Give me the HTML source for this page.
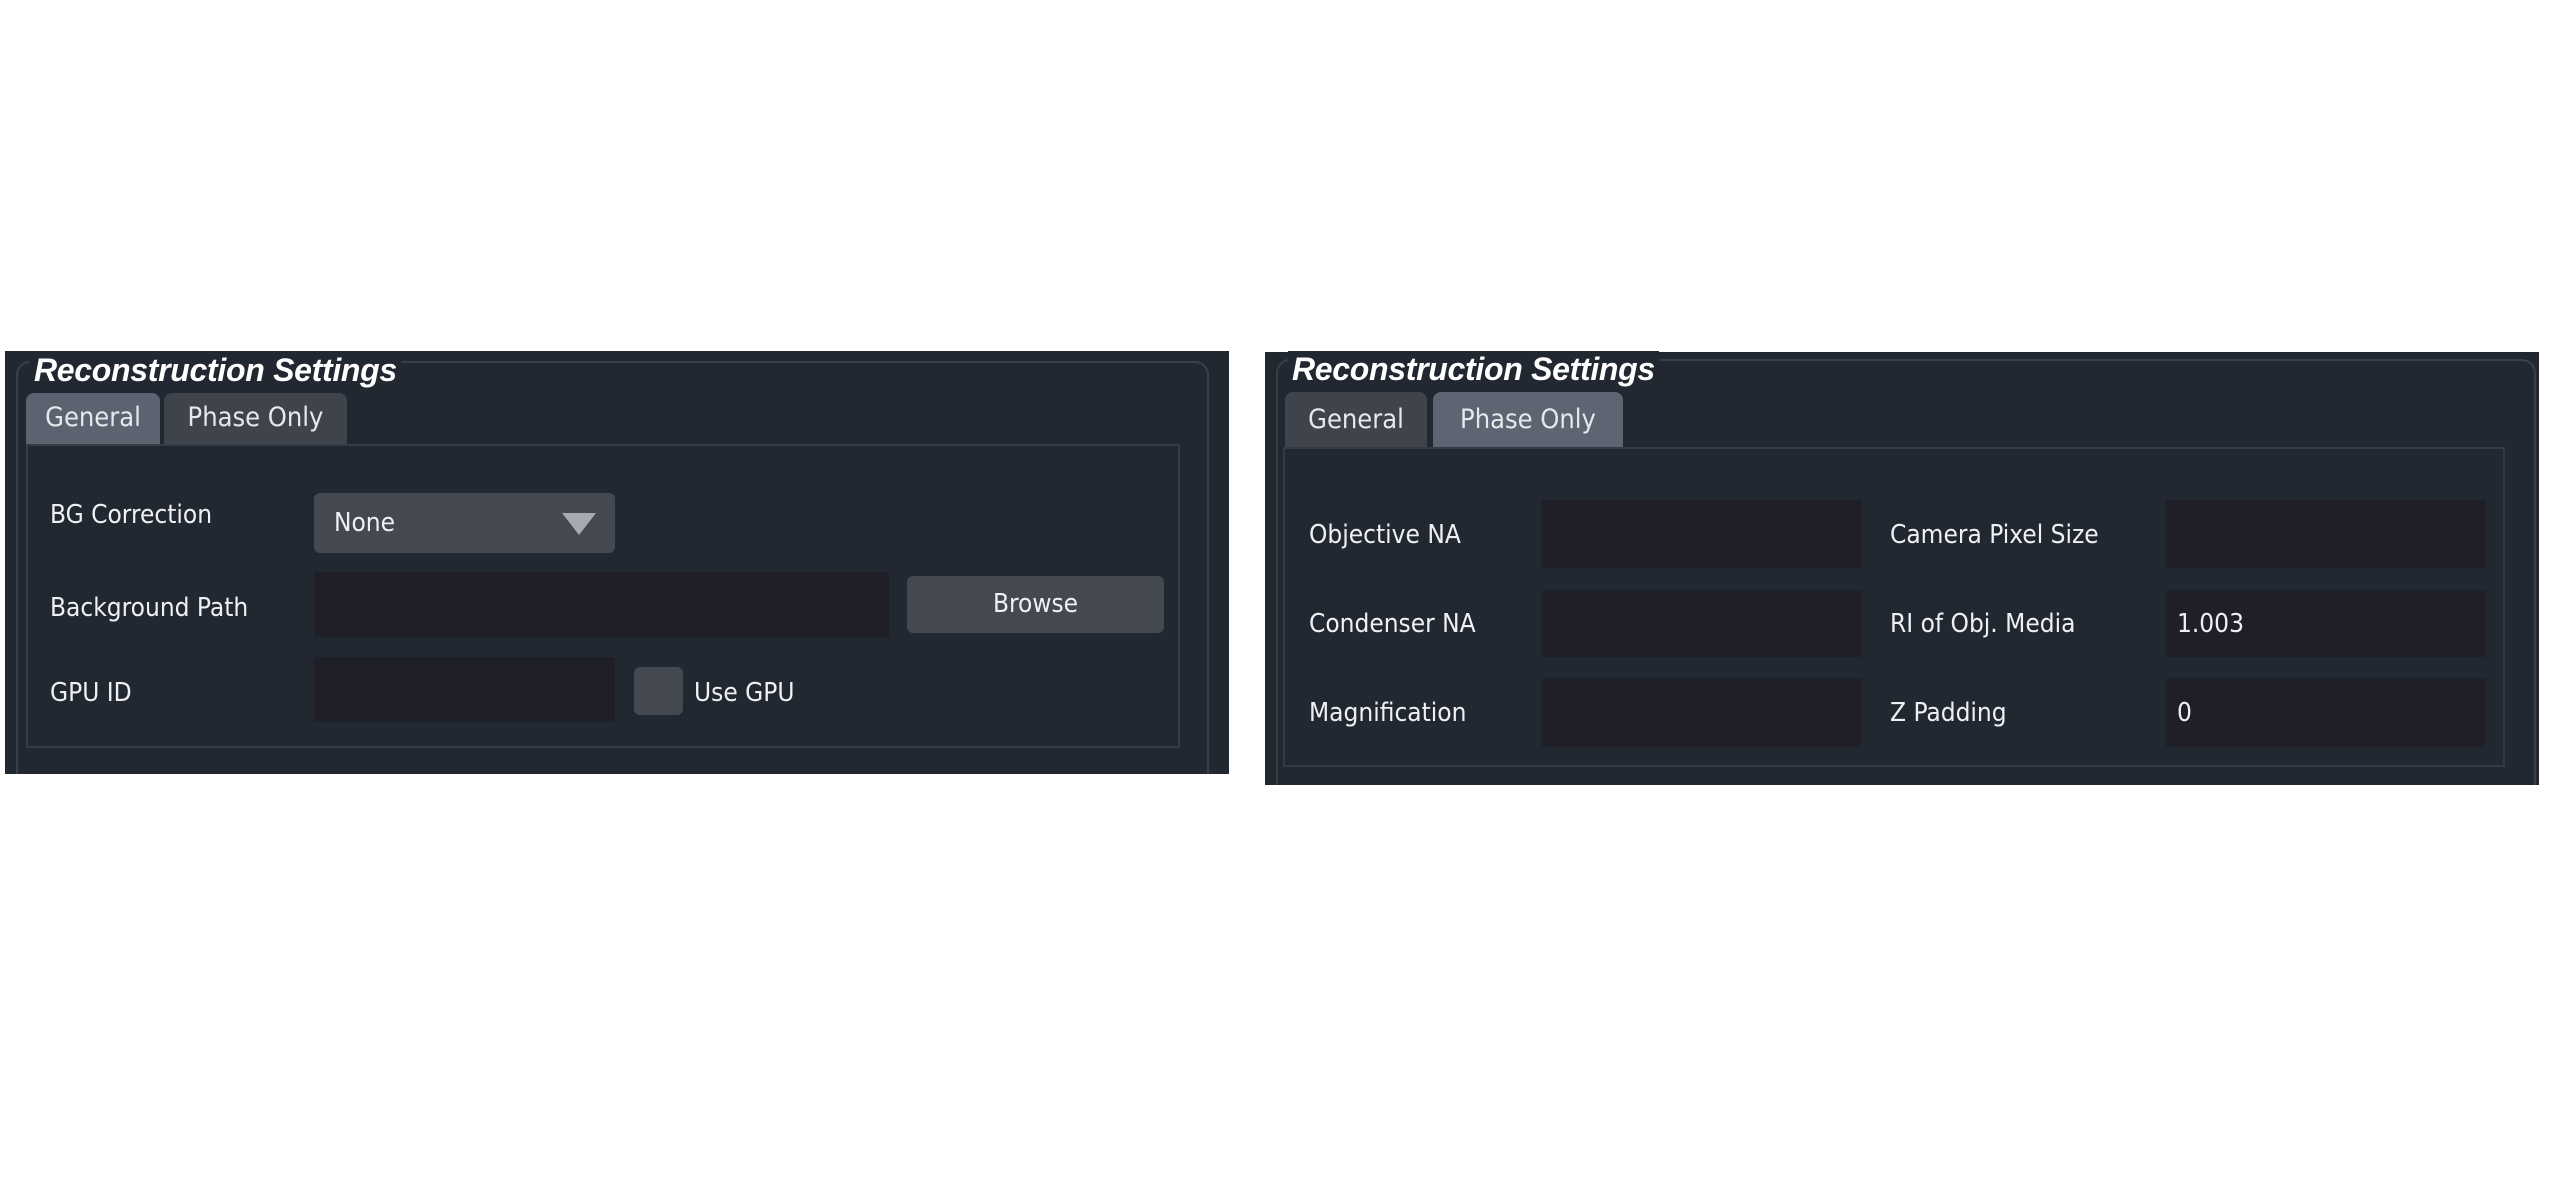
<!DOCTYPE html>
<html><head><meta charset="utf-8"><style>
html,body{margin:0;padding:0;background:#fff;width:2550px;height:1200px;overflow:hidden;position:relative;font-family:"DejaVu Sans Condensed","Liberation Sans",sans-serif;}
.p{position:absolute;background:#222831;overflow:hidden;}
.a{position:absolute;box-sizing:border-box;}
.grp{border:2px solid #3a3f48;border-radius:14px;}
.pane{border:2px solid #353b44;}
.title{position:absolute;color:#fff;font-family:"Liberation Sans",sans-serif;font-weight:bold;font-style:italic;font-size:32px;background:#222831;padding:0 4px;line-height:36px;letter-spacing:-0.3px;}
.tab{position:absolute;box-sizing:border-box;border-radius:8px 8px 0 0;color:#e6e8ec;font-size:27px;line-height:50px;text-align:center;}
.lbl{position:absolute;color:#eef0f3;font-size:26px;line-height:30px;white-space:nowrap;}
.inp{position:absolute;background:#1f1f27;}
.btn{position:absolute;background:#434851;border-radius:6px;color:#eef0f3;font-size:26px;text-align:center;}
</style></head><body>

<!-- Left panel -->
<div class="p" style="left:5px;top:351px;width:1224px;height:423px;">
<div class="a grp" style="left:11px;top:10px;width:1193px;height:440px;"></div>
</div>
<div class="title" style="left:30px;top:352px;">Reconstruction Settings</div>
<div class="tab" style="left:26px;top:393px;width:134px;height:52px;background:#5b6270;">General</div>
<div class="tab" style="left:164px;top:393px;width:183px;height:52px;background:#3f434b;">Phase Only</div>
<div class="a pane" style="left:26px;top:444px;width:1154px;height:304px;"></div>
<div class="lbl" style="left:50px;top:500px;">BG Correction</div>
<div class="btn" style="left:314px;top:493px;width:301px;height:60px;text-align:left;"><span style="position:absolute;left:20px;top:15px;">None</span>
<svg style="position:absolute;left:248px;top:20px" width="36" height="24"><polygon points="0,0 34,0 17,22" fill="#a7aab0"/></svg></div>
<div class="lbl" style="left:50px;top:593px;">Background Path</div>
<div class="inp" style="left:314px;top:572px;width:575px;height:65px;"></div>
<div class="btn" style="left:907px;top:576px;width:257px;height:57px;line-height:57px;">Browse</div>
<div class="lbl" style="left:50px;top:678px;">GPU ID</div>
<div class="inp" style="left:314px;top:657px;width:301px;height:65px;"></div>
<div class="a" style="left:634px;top:667px;width:49px;height:48px;background:#434851;border-radius:6px;"></div>
<div class="lbl" style="left:694px;top:678px;">Use GPU</div>

<!-- Right panel -->
<div class="p" style="left:1265px;top:352px;width:1274px;height:433px;">
<div class="a grp" style="left:11px;top:7px;width:1260px;height:460px;"></div>
</div>
<div class="title" style="left:1288px;top:351px;">Reconstruction Settings</div>
<div class="tab" style="left:1285px;top:392px;width:142px;height:55px;background:#3f434b;line-height:56px;">General</div>
<div class="tab" style="left:1433px;top:392px;width:190px;height:55px;background:#5d6472;line-height:56px;">Phase Only</div>
<div class="a pane" style="left:1283px;top:447px;width:1222px;height:320px;"></div>

<div class="lbl" style="left:1309px;top:520px;">Objective NA</div>
<div class="inp" style="left:1542px;top:500px;width:320px;height:68px;"></div>
<div class="lbl" style="left:1890px;top:520px;">Camera Pixel Size</div>
<div class="inp" style="left:2166px;top:500px;width:320px;height:68px;"></div>

<div class="lbl" style="left:1309px;top:609px;">Condenser NA</div>
<div class="inp" style="left:1542px;top:590px;width:320px;height:67px;"></div>
<div class="lbl" style="left:1890px;top:609px;">RI of Obj. Media</div>
<div class="inp" style="left:2166px;top:590px;width:320px;height:67px;"></div>
<div class="lbl" style="left:2177px;top:609px;">1.003</div>

<div class="lbl" style="left:1309px;top:698px;">Magnification</div>
<div class="inp" style="left:1542px;top:678px;width:320px;height:69px;"></div>
<div class="lbl" style="left:1890px;top:698px;">Z Padding</div>
<div class="inp" style="left:2166px;top:678px;width:320px;height:69px;"></div>
<div class="lbl" style="left:2177px;top:698px;">0</div>

</body></html>
